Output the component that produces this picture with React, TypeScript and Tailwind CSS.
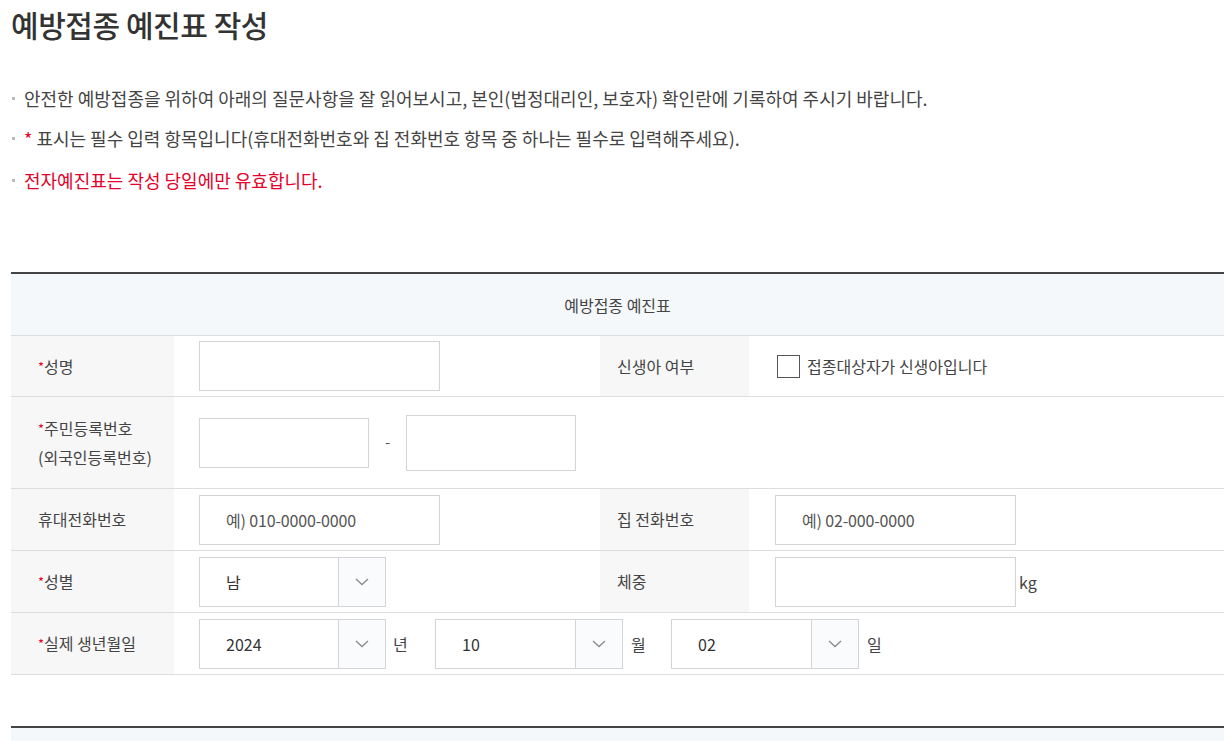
import type { ReactNode } from "react";

const font = { fontFamily: '"Noto Sans CJK KR", "Noto Sans", sans-serif' };

function Chevron() {
  return (
    <svg width="14" height="8" viewBox="0 0 14 8" fill="none">
      <path d="M1 1l6 5.5L13 1" stroke="#8a8a8a" strokeWidth="1.3" />
    </svg>
  );
}

function Label({ children, req, wide }: { children: ReactNode; req?: boolean; wide?: boolean }) {
  return (
    <div
      className={`${wide ? "w-[163px] pl-[27px]" : "w-[149px] pl-[17px]"} self-stretch flex items-center bg-[#f7f7f7] text-[16px] text-[#444] leading-[29px] shrink-0`}
    >
      <div>
        {req && <span className="text-[#e4002b] text-[13px] align-top">*</span>}
        {children}
      </div>
    </div>
  );
}

function TextBox({ w, h = "h-[50px]", placeholder }: { w: string; h?: string; placeholder?: string }) {
  return (
    <div className={`${w} ${h} border border-[#d4d4d8] bg-white flex items-center pl-[26px] text-[16px] tracking-[-0.01em] text-[#555]`}>
      {placeholder}
    </div>
  );
}

function Select({ value, w }: { value: string; w: string }) {
  return (
    <div className={`${w} h-[50px] border border-[#d4d4d8] bg-white flex`}>
      <div className="flex-1 flex items-center pl-[26px] text-[16px] text-[#333]">{value}</div>
      <div className="w-[47px] border-l border-[#d4d4d8] bg-[#fafbfd] flex items-center justify-center">
        <Chevron />
      </div>
    </div>
  );
}

export default function App() {
  return (
    <div className="bg-white min-h-[741px] overflow-hidden" style={font}>
      <h1 className="pl-[11px] pt-[3px] text-[30px] font-medium tracking-[-0.015em] text-[#333] leading-[42px]">
        예방접종 예진표 작성
      </h1>

      <ul className="mt-[33px] pl-[12px] text-[18px] text-[#444]">
        <li className="flex items-center h-[40px]">
          <span className="w-[3px] h-[3px] bg-[#bbb] mr-[9px] shrink-0" />
          안전한 예방접종을 위하여 아래의 질문사항을 잘 읽어보시고, 본인(법정대리인, 보호자) 확인란에 기록하여 주시기 바랍니다.
        </li>
        <li className="flex items-center h-[40px]">
          <span className="w-[3px] h-[3px] bg-[#bbb] mr-[9px] shrink-0" />
          <span className="text-[#e4002b] mr-[4px]">*</span>표시는 필수 입력 항목입니다(휴대전화번호와 집 전화번호 항목 중 하나는 필수로 입력해주세요).
        </li>
        <li className="flex items-center h-[40px] mt-[2px]">
          <span className="w-[3px] h-[3px] bg-[#bbb] mr-[9px] shrink-0" />
          <span className="text-[#e4002b]">전자예진표는 작성 당일에만 유효합니다.</span>
        </li>
      </ul>

      <div className="ml-[11px] w-[1213px] mt-[72px] border-t-2 border-[#444]">
        <div className="h-[62px] bg-[#f5f8fb] border-b border-[#ddd] flex items-center justify-center text-[16px] text-[#444]">
          예방접종 예진표
        </div>

        {/* 성명 / 신생아 여부 */}
        <div className="h-[61px] border-b border-[#ddd] flex items-center">
          <Label req wide>성명</Label>
          <div className="w-[426px] pl-[25px] flex items-center">
            <TextBox w="w-[241px]" />
          </div>
          <Label>신생아 여부</Label>
          <div className="flex items-center pl-[28px] gap-[7px] text-[16px] text-[#444]">
            <span className="w-[23px] h-[23px] border border-[#555] bg-white" />
            접종대상자가 신생아입니다
          </div>
        </div>

        {/* 주민등록번호 */}
        <div className="h-[92px] border-b border-[#ddd] flex items-center">
          <Label req wide>
            주민등록번호
            <br />
            (외국인등록번호)
          </Label>
          <div className="pl-[25px] flex items-center">
            <TextBox w="w-[170px]" />
            <span className="w-[37px] text-center text-[#555] text-[15px]">-</span>
            <TextBox w="w-[170px]" h="h-[56px]" />
          </div>
        </div>

        {/* 전화번호 */}
        <div className="h-[62px] border-b border-[#ddd] flex items-center">
          <Label wide>휴대전화번호</Label>
          <div className="w-[426px] pl-[25px] flex items-center">
            <TextBox w="w-[241px]" placeholder="예) 010-0000-0000" />
          </div>
          <Label>집 전화번호</Label>
          <div className="pl-[26px] flex items-center">
            <TextBox w="w-[241px]" placeholder="예) 02-000-0000" />
          </div>
        </div>

        {/* 성별 / 체중 */}
        <div className="h-[62px] border-b border-[#ddd] flex items-center">
          <Label req wide>성별</Label>
          <div className="w-[426px] pl-[25px] flex items-center">
            <Select value="남" w="w-[187px]" />
          </div>
          <Label>체중</Label>
          <div className="pl-[26px] flex items-center text-[16px] text-[#444]">
            <TextBox w="w-[241px]" />
            <span className="ml-[3px]">kg</span>
          </div>
        </div>

        {/* 생년월일 */}
        <div className="h-[62px] border-b border-[#ddd] flex items-center">
          <Label req wide>실제 생년월일</Label>
          <div className="pl-[25px] flex items-center text-[16px] text-[#444]">
            <Select value="2024" w="w-[187px]" />
            <span className="ml-[7px] w-[42px]">년</span>
            <Select value="10" w="w-[188px]" />
            <span className="ml-[8px] w-[40px]">월</span>
            <Select value="02" w="w-[188px]" />
            <span className="ml-[8px]">일</span>
          </div>
        </div>
      </div>

      <div className="ml-[11px] w-[1213px] mt-[51px] border-t-2 border-[#444] h-[40px] bg-[#f5f8fb]" />
    </div>
  );
}
